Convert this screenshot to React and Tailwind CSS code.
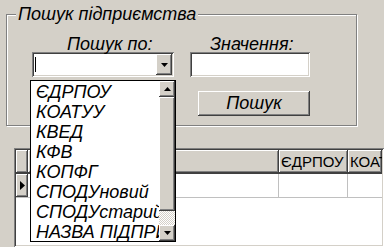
const raised =
  'shadow-[inset_-1px_-1px_0_#404040,inset_1px_1px_0_#ffffff,inset_-2px_-2px_0_#808080,inset_2px_2px_0_#d4d0c8]'
const sunken =
  'shadow-[inset_1px_1px_0_#808080,inset_-1px_-1px_0_#ffffff,inset_2px_2px_0_#404040,inset_-2px_-2px_0_#d4d0c8]'

const options = [
  'ЄДРПОУ',
  'КОАТУУ',
  'КВЕД',
  'КФВ',
  'КОПФГ',
  'СПОДУновий',
  'СПОДУстарий',
  'НАЗВА ПІДПРИЄМСТВА',
]

function Arrow({ up }) {
  return (
    <svg width="7" height="4" viewBox="0 0 7 4" className="block">
      <polygon points={up ? '3.5,0 7,4 0,4' : '0,0 7,0 3.5,4'} fill="#000" />
    </svg>
  )
}

function SearchBox() {
  return (
    <div className="relative ml-[6px] mt-[14px] h-[112px] w-[351px] border border-[#808080] shadow-[inset_1px_1px_0_#fff,1px_1px_0_#fff]">
      <span className="absolute left-[9px] top-[-11px] bg-[#d4d0c8] px-[2px] text-[18px] italic leading-[20px]">
        Пошук підприємства
      </span>
      <div className="flex gap-[16px] pl-[25px] pt-[21px]">
        <div className="w-[142px]">
          <div className="h-[16px] pl-[35px] text-[18px] italic leading-[16px]">Пошук по:</div>
          <div className={`flex h-[25px] items-stretch bg-white p-[2px] ${sunken}`}>
            <div className="flex-1 py-[3px] pl-[1px]">
              <div className="h-full w-px bg-black" />
            </div>
            <div className={`flex w-[16px] items-center justify-center bg-[#d4d0c8] ${raised}`}>
              <Arrow />
            </div>
          </div>
        </div>
        <div className="w-[120px]">
          <div className="h-[16px] pl-[20px] text-[18px] italic leading-[16px]">Значення:</div>
          <div className={`h-[25px] bg-white ${sunken}`} />
        </div>
      </div>
      <div
        className={`ml-[191px] mt-[14px] flex h-[25px] w-[112px] items-center justify-center text-[18px] italic ${raised}`}
      >
        Пошук
      </div>
    </div>
  )
}

function Grid() {
  return (
    <div className={`ml-[14px] mt-[22px] flex-1 bg-white p-[2px] ${sunken}`}>
      <div className="flex h-[24px] border-b border-[#404040] bg-[#d4d0c8] text-[15px] leading-[23px]">
        <div className={`w-[12px] ${raised}`} />
        <div className={`w-[251px] ${raised}`} />
        <div className={`w-[69px] pl-[2px] ${raised}`}>ЄДРПОУ</div>
        <div className={`flex-1 overflow-hidden whitespace-nowrap pl-[2px] ${raised}`}>КОАТУУ</div>
      </div>
      <div className="flex h-[24px] border-b border-[#c0c0c0]">
        <div className={`flex w-[12px] items-center justify-center bg-[#d4d0c8] ${raised}`}>
          <svg width="5" height="9" viewBox="0 0 5 9">
            <polygon points="0,0 5,4.5 0,9" fill="#000" />
          </svg>
        </div>
        <div className="w-[251px] border-r border-[#c0c0c0]" />
        <div className="w-[69px] border-r border-[#c0c0c0]" />
        <div className="flex-1" />
      </div>
    </div>
  )
}

function DropList() {
  return (
    <div className="absolute left-[30px] top-[80px] flex h-[162px] w-[146px] border border-black bg-white">
      <div className="flex-1 overflow-hidden pt-[1px]">
        {options.map((o) => (
          <div key={o} className="h-[20px] whitespace-nowrap pl-[5px] text-[18px] italic leading-[20px]">
            {o}
          </div>
        ))}
      </div>
      <div className="flex w-[16px] flex-col">
        <div className={`flex h-[16px] items-center justify-center bg-[#d4d0c8] ${raised}`}>
          <Arrow up />
        </div>
        <div className={`flex-1 bg-[#d4d0c8] ${raised}`} />
        <div className="h-[14px] bg-[repeating-conic-gradient(#ffffff_0_25%,#d4d0c8_0_50%)] bg-[length:2px_2px]" />
        <div className={`flex h-[16px] items-center justify-center bg-[#d4d0c8] ${raised}`}>
          <Arrow />
        </div>
      </div>
    </div>
  )
}

export default function App() {
  return (
    <div
      className="relative flex h-[247px] w-[384px] flex-col overflow-hidden bg-[#d4d0c8] text-black"
      style={{ fontFamily: '"Liberation Sans", Arial, sans-serif' }}
    >
      <SearchBox />
      <Grid />
      <DropList />
    </div>
  )
}
